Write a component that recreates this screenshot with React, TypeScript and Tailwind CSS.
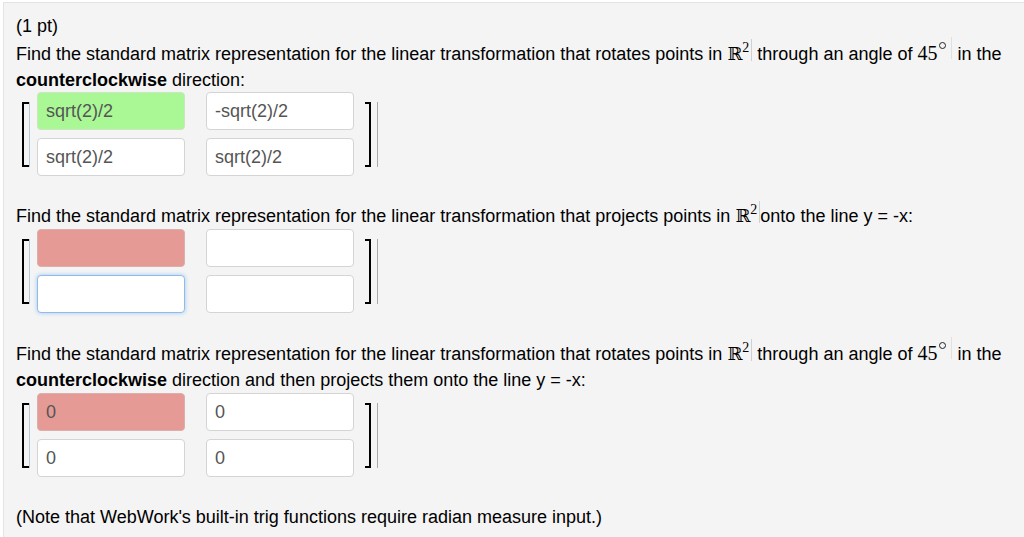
import React from "react";

const font = { fontFamily: '"Liberation Sans", Arial, sans-serif' };

function R2() {
  return (
    <span className="inline-flex items-start align-baseline">
      <span className="font-['DejaVu_Serif',serif] text-[18px] leading-none">ℝ</span>
      <span className="font-['Liberation_Serif',serif] text-[14px] leading-none -mt-[4px]">2</span>
      <span className="inline-block w-px h-[22px] bg-[#d0d0d0] ml-[2px] -mt-[6px]"></span>
    </span>
  );
}

function Deg45() {
  return (
    <span className="inline-flex items-start">
      <span className="font-['Liberation_Serif',serif] text-[20px] leading-none">45</span>
      <span className="inline-block w-[7px] h-[7px] rounded-full border border-[#222] ml-[2px] -mt-[1px]"></span>
      <span className="inline-block w-px h-[22px] bg-[#e0e0e0] ml-[5px] -mt-[6px]"></span>
    </span>
  );
}

type Cell = { v: string; s?: "green" | "red" | "focus" };

function Input({ c }: { c: Cell }) {
  let cls =
    "h-[38px] w-[148px] rounded-[4px] border px-[8px] flex items-center text-[18px] text-[#555]";
  if (c.s === "green") cls += " bg-[#aaf796] border-[#c8e6bf]";
  else if (c.s === "red") cls += " bg-[#e69a96] border-[#d9b0ae]";
  else if (c.s === "focus")
    cls += " bg-white border-[#8fbbef] shadow-[0_0_4px_rgba(102,175,233,0.6)]";
  else cls += " bg-white border-[#d4d4d4]";
  return <div className={cls}>{c.v}</div>;
}

function Matrix({ cells }: { cells: Cell[] }) {
  return (
    <div className="flex items-center h-[84px]">
      <div className="ml-[6px] w-[7px] h-[65px] border-l-2 border-t-2 border-b-2 border-black"></div>
      <div className="w-px h-[65px] bg-[#b8c8d8]"></div>
      <div className="ml-[7px] grid grid-cols-[148px_148px] gap-x-[21px] gap-y-[8px]">
        {cells.map((c, i) => (
          <Input key={i} c={c} />
        ))}
      </div>
      <div className="ml-[11px] w-[6px] h-[65px] border-r-2 border-t-2 border-b-2 border-black"></div>
      <div className="ml-[6px] w-px h-[65px] bg-[#aaaaaa]"></div>
    </div>
  );
}

export default function App() {
  return (
    <div className="w-[1024px] h-[537px] bg-white overflow-hidden" style={font}>
      <div className="ml-[3px] mt-[2px] h-[535px] border-l border-t border-[#e4e4e4] bg-[#f4f4f4] pl-[12px] pt-[10px] text-[18px] leading-[26px] text-black">
        <div className="mb-[2px]">(1 pt)</div>
        <div>
          Find the standard matrix representation for the linear transformation that rotates points in <R2 /> through an angle of <Deg45 /> in the
        </div>
        <div>
          <b>counterclockwise</b> direction:
        </div>
        <div className="-mt-[1px]">
          <Matrix
            cells={[
              { v: "sqrt(2)/2", s: "green" },
              { v: "-sqrt(2)/2" },
              { v: "sqrt(2)/2" },
              { v: "sqrt(2)/2" },
            ]}
          />
        </div>
        <div className="mt-[27px]">
          Find the standard matrix representation for the linear transformation that projects points in <R2 />onto the line y = -x:
        </div>
        <Matrix
          cells={[
            { v: "", s: "red" },
            { v: "" },
            { v: "", s: "focus" },
            { v: "" },
          ]}
        />
        <div className="mt-[28px]">
          Find the standard matrix representation for the linear transformation that rotates points in <R2 /> through an angle of <Deg45 /> in the
        </div>
        <div>
          <b>counterclockwise</b> direction and then projects them onto the line y = -x:
        </div>
        <Matrix
          cells={[
            { v: "0", s: "red" },
            { v: "0" },
            { v: "0" },
            { v: "0" },
          ]}
        />
        <div className="mt-[27px]">
          (Note that WebWork's built-in trig functions require radian measure input.)
        </div>
      </div>
    </div>
  );
}
